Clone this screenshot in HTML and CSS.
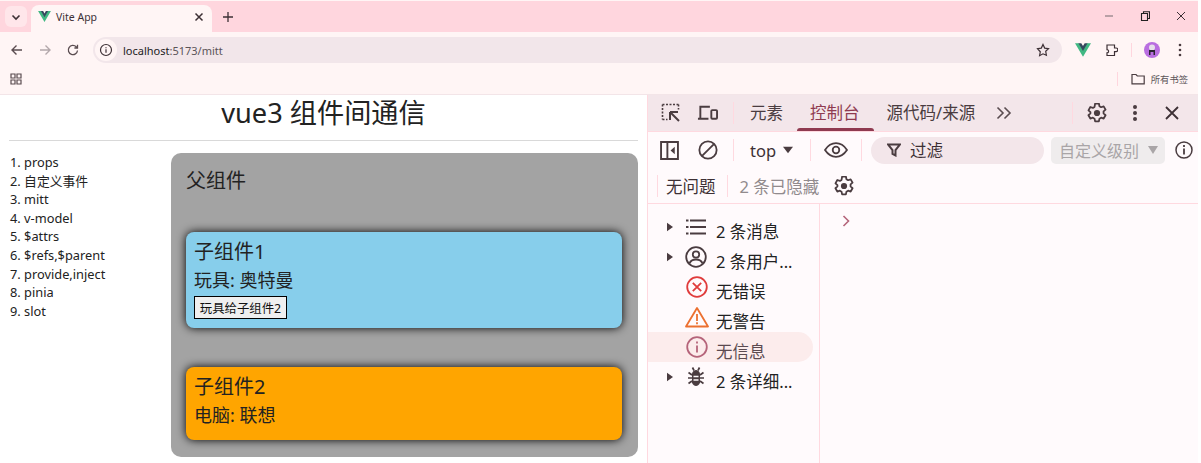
FILE: index.html
```html
<!DOCTYPE html>
<html lang="zh-CN">
<head>
    <meta charset="UTF-8">
    <title>Vite App</title>
    <link rel="stylesheet" href="styles.css">
</head>
<body>
    <div class="browser">
        <div class="tab-strip">
            <div class="tab-search"><svg width="10" height="10" viewBox="0 0 10 10"><path d="M1.500 3.500 5 7l3.500-3.500" fill="none" stroke="#3d3035" stroke-width="1.600"/></svg></div>
            <div class="tab">
                <svg class="tab-logo" width="13" height="11" viewBox="0 0 14 12"><path d="M0 0h3.500L7 6l3.500-6H14L7 12z" fill="#41b883"/><path d="M3 0h2.500L7 2.600 8.500 0H11L7 6.800z" fill="#35495e"/></svg>
                <span class="tab-title">Vite App</span>
                <svg class="tab-close" width="10" height="10" viewBox="0 0 10 10"><path d="m1.500 1.500 7 7m0-7-7 7" stroke="#3d3035" stroke-width="1.500"/></svg>
            </div>
            <svg class="new-tab" width="12" height="12" viewBox="0 0 12 12"><path d="M6 1v10M1 6h10" stroke="#3d3035" stroke-width="1.300"/></svg>
            <div class="window-btns">
                <svg width="10" height="10" viewBox="0 0 10 10"><path d="M1 5h8" stroke="#8a7c80" stroke-width="1.200"/></svg>
                <svg width="10" height="10" viewBox="0 0 10 10"><path d="M1.500 2.500h6v7h-6zM3.500 2.500V.8h6v6.700H7.500" fill="none" stroke="#222" stroke-width="1.100"/></svg>
                <svg width="10" height="10" viewBox="0 0 10 10"><path d="m1 1 8 8m0-8-8 8" stroke="#3d3035" stroke-width="1"/></svg>
            </div>
        </div>
        <div class="toolbar">
            <svg class="nav-btn" width="14" height="14" viewBox="0 0 14 14"><path d="M12 7H2m4.500-4.500L2 7l4.500 4.500" fill="none" stroke="#5a4c50" stroke-width="1.400"/></svg>
            <svg class="nav-btn" width="14" height="14" viewBox="0 0 14 14"><path d="M2 7h10M7.500 2.500 12 7l-4.500 4.500" fill="none" stroke="#b3a8ab" stroke-width="1.400"/></svg>
            <svg class="nav-btn" width="14" height="14" viewBox="0 0 14 14"><path d="M11.500 7.500a4.600 4.600 0 1 1-1.300-3.700L11.500 5M11.500 1.800V5H8.400" fill="none" stroke="#5a4c50" stroke-width="1.300"/></svg>
            <div class="address">
                <span class="site-info"><svg width="14" height="14" viewBox="0 0 14 14"><circle cx="7" cy="7" r="5.500" fill="none" stroke="#3d3035" stroke-width="1.200"/><path d="M7 6.200v3.600M7 4.200v1.100" stroke="#3d3035" stroke-width="1.200"/></svg></span>
                <span class="url"><b>localhost</b>:5173/mitt</span>
                <svg class="star" width="14" height="14" viewBox="0 0 14 14"><path d="m7 1.500 1.700 3.600 3.800.5-2.800 2.700.7 3.900L7 10.800l-3.400 1.900.7-3.900L1.500 5.600l3.800-.5z" fill="none" stroke="#3d3035" stroke-width="1.200"/></svg>
            </div>
            <svg class="ext-vue" width="16" height="14" viewBox="0 0 14 12"><path d="M0 0h3.500L7 6l3.500-6H14L7 12z" fill="#41b883"/><path d="M3 0h2.500L7 2.600 8.500 0H11L7 6.800z" fill="#35495e"/></svg>
            <svg class="ext-puzzle" width="14" height="14" viewBox="0 0 14 14"><path d="M3 2h7.500v3H12a1.800 1.800 0 0 1 0 3.600h-1.500v3.900H3V9.800a1.600 1.600 0 0 0 0-3.200z" fill="none" stroke="#3d3035" stroke-width="1.200"/></svg>
            <span class="tool-sep"></span>
            <span class="avatar"><svg width="10" height="12" viewBox="0 0 10 12"><circle cx="5" cy="3.500" r="3" fill="#e6e0ea"/><path d="M2 11V6h6v5H6.500V8h-3v3z" fill="#2b2430"/></svg></span>
            <svg class="menu-dots" width="4" height="14" viewBox="0 0 4 14"><circle cx="2" cy="2" r="1.300" fill="#4a3c40"/><circle cx="2" cy="7" r="1.300" fill="#4a3c40"/><circle cx="2" cy="12" r="1.300" fill="#4a3c40"/></svg>
        </div>
        <div class="bookmarks">
            <svg width="12" height="12" viewBox="0 0 12 12"><path d="M1 1h4v4H1zM7 1h4v4H7zM1 7h4v4H1zM7 7h4v4H7z" fill="none" stroke="#5a4c50" stroke-width="1.200"/></svg>
            <span class="bookmarks-sep"></span>
            <svg class="folder" width="14" height="12" viewBox="0 0 14 12"><path d="M1 10.800V1.500h4l1.300 1.500h6.900v7.800z" fill="none" stroke="#4a3c40" stroke-width="1.200"/></svg>
            <span class="bookmarks-all">所有书签</span>
        </div>
    </div>

    <div class="viewport">
        <div class="app">
            <h1 class="app-title">vue3 组件间通信</h1>
            <hr class="app-rule">
            <div class="app-main">
                <ol class="nav-list">
                    <li>props</li>
                    <li>自定义事件</li>
                    <li>mitt</li>
                    <li>v-model</li>
                    <li>$attrs</li>
                    <li>$refs,$parent</li>
                    <li>provide,inject</li>
                    <li>pinia</li>
                    <li>slot</li>
                </ol>
                <div class="father">
                    <h3 class="father-title">父组件</h3>
                    <div class="child child-one">
                        <h3>子组件1</h3>
                        <h4>玩具: 奥特曼</h4>
                        <button class="give-btn">玩具给子组件2</button>
                    </div>
                    <div class="child child-two">
                        <h3>子组件2</h3>
                        <h4>电脑: 联想</h4>
                    </div>
                </div>
            </div>
        </div>

        <div class="devtools">
            <div class="dt-tabs">
                <svg class="dt-icon first" width="20" height="20" viewBox="0 0 20 20"><path d="M1.500 1.500h16M1.500 1.500v15M17.500 1.500v5M1.500 16.500h5" fill="none" stroke="#4a3c40" stroke-width="1.600" stroke-dasharray="2 1.500"/><path d="M9 9h8M9 9v8M9.500 9.500 18 18" fill="none" stroke="#4a3c40" stroke-width="2"/></svg>
                <svg class="dt-icon" width="21" height="18" viewBox="0 0 22 18"><path d="M3.500 14V2.500h10M1 15h11" fill="none" stroke="#4a3c40" stroke-width="2"/><rect x="15" y="6" width="6" height="9" rx="1" fill="none" stroke="#4a3c40" stroke-width="2"/></svg>
                <span class="dt-sep tabs-sep"></span>
                <span class="dt-tab">元素</span>
                <span class="dt-tab active">控制台</span>
                <span class="dt-tab">源代码/来源</span>
                <svg class="dt-more" width="16" height="14" viewBox="0 0 16 14"><path d="m1.500 1.500 5.500 5.500-5.500 5.500M8.500 1.500 14 7l-5.500 5.500" fill="none" stroke="#5a4c50" stroke-width="1.600"/></svg>
                <span class="dt-sep more-sep"></span>
                <svg class="gear" width="20" height="20" viewBox="1 1 18 18"><path d="M8.300 1.500h3.400l.5 2.400 1.500.9 2.300-.8 1.700 3-1.800 1.600v1.800l1.800 1.600-1.700 3-2.300-.8-1.500.9-.5 2.400H8.300l-.5-2.400-1.500-.9-2.300.8-1.700-3 1.800-1.600V9.200L2.300 7.600l1.700-3 2.300.8 1.500-.9z" fill="none" stroke="#4a3c40" stroke-width="1.600" stroke-linejoin="round"/><circle cx="10" cy="10" r="2.800" fill="#4a3c40"/></svg>
                <svg class="dots" width="6" height="18" viewBox="0 0 6 18"><circle cx="3" cy="3" r="2" fill="#4a3c40"/><circle cx="3" cy="9" r="2" fill="#4a3c40"/><circle cx="3" cy="15" r="2" fill="#4a3c40"/></svg>
                <svg class="dt-close" width="14" height="14" viewBox="0 0 14 14"><path d="m1 1 12 12m0-12L1 13" stroke="#3d3035" stroke-width="1.800"/></svg>
            </div>
            <div class="dt-filter">
                <svg width="19" height="19" viewBox="0 0 18 18"><path d="M1 1h16v16H1zM7 1v16" fill="none" stroke="#4a3c40" stroke-width="1.800"/><path d="M14 5.500v7L10 9z" fill="#4a3c40"/></svg>
                <svg class="clear-icon" width="20" height="20" viewBox="0 0 22 22"><circle cx="11" cy="11" r="9.500" fill="none" stroke="#4a3c40" stroke-width="2"/><path d="m4.500 17.500 13-13" stroke="#4a3c40" stroke-width="2"/></svg>
                <span class="dt-sep"></span>
                <span class="context">top</span>
                <svg class="caret" width="10" height="8" viewBox="0 0 12 8"><path d="M0 0h12L6 8z" fill="#4a3c40"/></svg>
                <span class="dt-sep"></span>
                <svg class="eye" width="24" height="16" viewBox="0 0 24 16"><path d="M1 8c3-4.500 6.500-6.800 11-6.800S20 3.500 23 8c-3 4.500-6.500 6.800-11 6.800S4 12.500 1 8z" fill="none" stroke="#4a3c40" stroke-width="1.800"/><circle cx="12" cy="8" r="3.300" fill="none" stroke="#4a3c40" stroke-width="1.800"/></svg>
                <span class="dt-sep"></span>
                <div class="filter-box">
                    <svg width="14" height="14" viewBox="0 0 14 14"><path d="M1 1.500h12L8.500 7v5.500l-3-1.500V7z" fill="none" stroke="#4a3c40" stroke-width="2"/></svg>
                    <span>过滤</span>
                </div>
                <div class="level-box">
                    <span>自定义级别</span>
                    <svg width="10" height="8" viewBox="0 0 10 8"><path d="M0 0h10L5 8z" fill="#a9a5a7"/></svg>
                </div>
                <svg class="info-btn" width="18" height="18" viewBox="0 0 18 18"><circle cx="9" cy="9" r="8" fill="none" stroke="#4a3c40" stroke-width="1.500"/><path d="M9 7.500v6M9 4v2" stroke="#4a3c40" stroke-width="1.800"/></svg>
            </div>
            <div class="dt-issues">
                <span class="dt-sep"></span>
                <span class="no-issues">无问题</span>
                <span class="dt-sep"></span>
                <span class="hidden-count">2 条已隐藏</span>
                <svg width="20" height="20" viewBox="1 1 18 18"><path d="M8.300 1.500h3.400l.5 2.400 1.500.9 2.300-.8 1.700 3-1.800 1.600v1.800l1.800 1.600-1.700 3-2.300-.8-1.500.9-.5 2.400H8.300l-.5-2.400-1.500-.9-2.300.8-1.700-3 1.800-1.600V9.200L2.300 7.600l1.700-3 2.300.8 1.500-.9z" fill="none" stroke="#4a3c40" stroke-width="1.600" stroke-linejoin="round"/><circle cx="10" cy="10" r="2.800" fill="#4a3c40"/></svg>
            </div>
            <div class="dt-body">
                <div class="dt-side">
                    <div class="side-row">
                        <svg class="arrow" width="6" height="10" viewBox="0 0 7 10"><path d="M0 0l7 5-7 5z" fill="#4a3c40"/></svg>
                        <svg class="side-icon" width="22" height="22" viewBox="0 0 22 22"><path d="M5 4.500h16M5 11h16M5 17.500h16M1 4.500h2.500M1 11h2.500M1 17.500h2.500" stroke="#4a3c40" stroke-width="2"/></svg>
                        <span class="side-label">2 条消息</span>
                    </div>
                    <div class="side-row">
                        <svg class="arrow" width="6" height="10" viewBox="0 0 7 10"><path d="M0 0l7 5-7 5z" fill="#4a3c40"/></svg>
                        <svg class="side-icon" width="22" height="22" viewBox="0 0 22 22"><circle cx="11" cy="11" r="9.800" fill="none" stroke="#4a3c40" stroke-width="1.800"/><circle cx="11" cy="8.500" r="3.200" fill="none" stroke="#4a3c40" stroke-width="1.800"/><path d="M4.500 17.500c1-3 3.500-4 6.500-4s5.500 1 6.500 4" fill="none" stroke="#4a3c40" stroke-width="1.800"/></svg>
                        <span class="side-label">2 条用户...</span>
                    </div>
                    <div class="side-row">
                        <svg class="side-icon no-arrow" width="22" height="22" viewBox="0 0 22 22"><circle cx="11" cy="11" r="9.800" fill="none" stroke="#e03c3c" stroke-width="1.800"/><path d="m6.800 6.800 8.400 8.400m0-8.400-8.400 8.400" stroke="#e03c3c" stroke-width="1.800"/></svg>
                        <span class="side-label">无错误</span>
                    </div>
                    <div class="side-row">
                        <svg class="side-icon warn" width="24" height="22" viewBox="0 0 24 22"><path d="M12 2 23 20.500H1z" fill="none" stroke="#ec7030" stroke-width="1.800" stroke-linejoin="round"/><path d="M12 8v7M12 16.200v2" stroke="#ec7030" stroke-width="1.800"/></svg>
                        <span class="side-label">无警告</span>
                    </div>
                    <div class="side-row selected">
                        <svg class="side-icon no-arrow" width="22" height="22" viewBox="0 0 22 22"><circle cx="11" cy="11" r="9.800" fill="none" stroke="#b5647a" stroke-width="1.800"/><path d="M11 9.500v7M11 5.500v2" stroke="#b5647a" stroke-width="1.800"/></svg>
                        <span class="side-label">无信息</span>
                    </div>
                    <div class="side-row">
                        <svg class="arrow" width="6" height="10" viewBox="0 0 7 10"><path d="M0 0l7 5-7 5z" fill="#4a3c40"/></svg>
                        <svg class="side-icon" width="22" height="22" viewBox="0 0 22 22"><path d="M7.500 1.500l1.500 3M14.500 1.500l-1.500 3M3.500 6.500 7 9M18.500 6.500 15 9M3 12h4M19 12h-4M3.500 17.500 7 15M18.500 17.500 15 15" stroke="#4a3c40" stroke-width="1.700"/><path d="M7 7.500C7.500 5.500 9.300 4 11 4s3.500 1.500 4 3.500v9c-.5 2-2.300 3.500-4 3.500s-3.500-1.500-4-3.500z" fill="#4a3c40"/><path d="M8.500 10.500h5M8.500 14h5" stroke="#fffafc" stroke-width="1.400"/></svg>
                        <span class="side-label">2 条详细...</span>
                    </div>
                </div>
                <div class="dt-console">
                    <svg width="8" height="12" viewBox="0 0 8 12"><path d="m1.500 1 5 5-5 5" fill="none" stroke="#b5647a" stroke-width="1.600"/></svg>
                </div>
            </div>
        </div>
    </div>
</body>
</html>
```

FILE: styles.css
```css
* { box-sizing: border-box; }
html, body { margin: 0; padding: 0; height: 463px; overflow: hidden; background: #fff; }
body { font-family: "Noto Sans", "Noto Sans CJK SC", sans-serif; color: #222; padding-right: 3px; }
svg { flex: none; display: block; }

/* browser chrome */
.browser { height: 95px; padding-top: 1px; background: #fff5f5; border-bottom: 1px solid #f3e5e8; }
.tab-strip { height: 31px; background: #ffd6de; display: flex; align-items: flex-end; padding-left: 5px; }
.tab-search { width: 22px; height: 21px; margin-bottom: 5px; border-radius: 6px; background: #ffe6ea; display: flex; align-items: center; justify-content: center; }
.tab { width: 181px; height: 27px; margin-left: 4px; background: #fff5f5; border-radius: 8px 8px 0 0; display: flex; align-items: center; padding: 0 8px 4px 7px; font-size: 10.500px; color: #3d3035; }
.tab-logo { margin-right: 5px; }
.tab-title { flex: 1; }
.new-tab { margin: 0 0 9px 10px; }
.window-btns { margin-left: auto; margin-bottom: 11px; display: flex; gap: 26px; padding-right: 12px; }
.toolbar { height: 31px; display: flex; align-items: center; padding: 5px 6px 0 10px; }
.nav-btn { margin-right: 14px; }
.address { width: 969px; height: 26px; margin-left: -1px; background: #f2e6ea; border-radius: 13px; display: flex; align-items: center; padding-right: 12px; }
.site-info { width: 22px; height: 22px; margin-left: 2px; border-radius: 50%; background: #fff5f5; display: flex; align-items: center; justify-content: center; }
.url { flex: 1; margin-left: 6px; font-size: 11px; color: #5b5458; }
.url b { font-weight: normal; color: #222; }
.ext-vue { margin-left: 13px; }
.ext-puzzle { margin-left: 13px; }
.tool-sep { width: 1px; height: 14px; margin: 0 12px 0 13px; background: #ffd6de; }
.avatar { width: 16px; height: 16px; border-radius: 50%; background: #b96ee0; display: flex; align-items: center; justify-content: center; }
.menu-dots { margin-left: 18px; }
.bookmarks { height: 31px; display: flex; align-items: center; padding: 0 0 0 10px; font-size: 9.300px; color: #5b5458; }
.bookmarks-sep { width: 1px; height: 14px; margin-left: auto; background: #ffd6de; }
.folder { margin-left: 13px; }
.bookmarks-all { margin: 0 10px 0 6px; }

/* page */
.viewport { display: flex; height: 368px; }
.app { width: 647px; padding: 0 9px; flex: none; }
.app-title { margin: 0; font-size: 27.200px; font-weight: normal; line-height: 36px; text-align: center; color: #222; }
.app-rule { margin: 9px 0 12px; border: 0; border-top: 1px solid #d9d9d9; }
.app-main { display: flex; }
.nav-list { margin: 0; padding: 0 0 0 1px; width: 162px; font-size: 12.800px; line-height: 18.600px; list-style: none; counter-reset: nav; flex: none; }
.nav-list li { counter-increment: nav; }
.nav-list li::before { content: counter(nav) ". "; }
.father { flex: 1; height: 304px; background: #a3a3a3; border-radius: 10px; padding: 13px 16px 13px 15px; }
.father-title { margin: 0 0 36px; font-size: 20px; font-weight: normal; line-height: 30px; }
.child { border-radius: 8px; box-shadow: 0 0 10px #000; padding: 6px 8px; color: #222; }
.child h3 { margin: 0; font-size: 20px; font-weight: normal; line-height: 28px; }
.child h4 { margin: 0; font-size: 18px; font-weight: normal; line-height: 28px; }
.child-one { height: 96px; margin-bottom: 39px; background: skyblue; }
.child-two { height: 73px; background: orange; }
.give-btn { display: block; margin-top: 2px; width: 93px; height: 23px; padding: 0; background: #efefef; border: 1px solid #000; font: 12.400px "Noto Sans", "Noto Sans CJK SC", sans-serif; color: #111; }

/* devtools */
.devtools { flex: 1; border-left: 1px solid #ffd9e0; background: #fffafc; color: #3d3035; font-size: 16.500px; display: flex; flex-direction: column; }
.dt-sep { width: 1px; height: 22px; background: #ffd9e0; flex: none; }
.dt-tabs { height: 37px; background: #f3e6ea; border-bottom: 1px solid #ffd9e0; display: flex; align-items: center; }
.dt-icon { margin-right: 15px; }
.dt-icon.first { margin-left: 13px; margin-right: 16px; }
.tabs-sep { margin-right: 16px; }
.dt-tab { height: 36px; line-height: 36px; margin-right: 27px; color: #4a3c40; position: relative; white-space: nowrap; }
.dt-tab.active { color: #8f3a50; }
.dt-tab.active::after { content: ""; position: absolute; left: -13px; right: -14px; bottom: 0; height: 3px; border-radius: 3px 3px 0 0; background: #8f3a50; }
.dt-more { margin-left: -6px; }
.more-sep { margin-left: 60px; }
.gear { margin-left: 14px; }
.dots { margin-left: 25px; }
.dt-close { margin-left: 27px; }
.dt-filter { height: 36px; display: flex; align-items: center; padding-left: 12px; }
.clear-icon { margin-left: 19px; margin-right: 15px; }
.context { margin-left: 16px; color: #3d3035; }
.caret { margin: 0 17px 0 7px; }
.eye { margin: 0 13px; }
.filter-box { width: 173px; height: 27px; margin-left: 9px; background: #f3e6ea; border-radius: 14px; display: flex; align-items: center; padding-left: 16px; gap: 9px; }
.level-box { width: 114px; height: 27px; margin-left: 7px; background: #efeced; border-radius: 5px; display: flex; align-items: center; padding-left: 8px; gap: 9px; color: #a9a5a7; font-size: 16px; }
.info-btn { margin-left: 10px; }
.dt-issues { height: 36px; border-bottom: 1px solid #ffd9e0; display: flex; align-items: center; padding-left: 9px; }
.no-issues { margin: 0 11px 0 8px; }
.hidden-count { margin: 0 15px 0 12px; color: #918a8d; }
.dt-body { flex: 1; display: flex; }
.dt-side { width: 172px; border-right: 1px solid #ffd9e0; padding-top: 8px; }
.side-row { height: 30px; display: flex; align-items: center; padding-left: 19px; color: #222; width: 165px; border-radius: 0 15px 15px 0; }
.side-row.selected { background: #fcecec; color: #5b4a50; }
.side-label { padding-top: 7px; }
.side-icon { margin-left: 12px; margin-right: 9px; }
.side-icon.no-arrow { margin-left: 19px; margin-right: 8px; }
.side-icon.warn { margin-left: 18px; margin-right: 7px; }
.dt-console { flex: 1; padding: 11px 0 0 22px; }
```
